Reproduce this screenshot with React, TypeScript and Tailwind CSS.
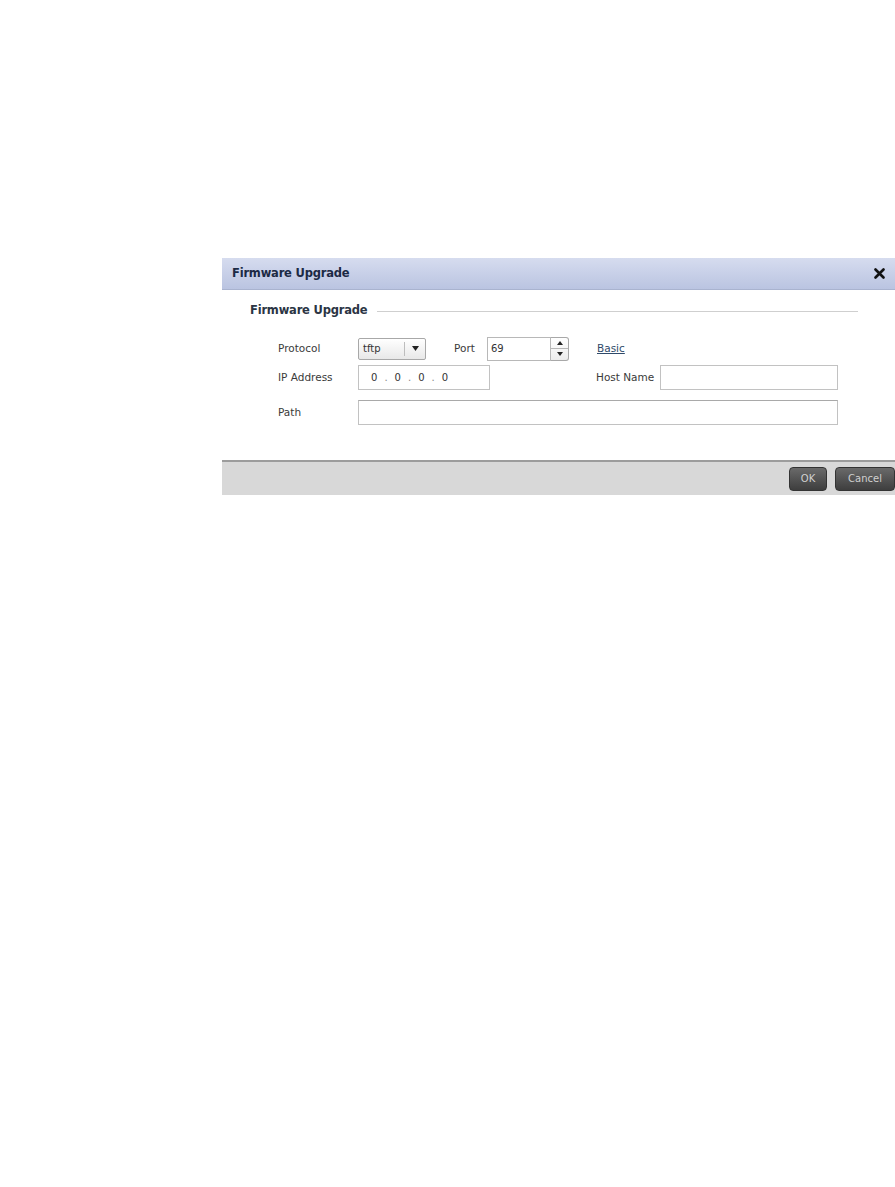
import React from 'react';

const font = { fontFamily: '"DejaVu Sans", "Liberation Sans", sans-serif' };

export default function App() {
  return (
    <div className="w-[895px] h-[1187px] bg-white overflow-hidden" style={font}>
      <div className="ml-[222px] mt-[258px] w-[673px]">
        <Header />
        <Body />
        <Footer />
      </div>
    </div>
  );
}

function Header() {
  return (
    <div className="h-[32px] flex items-center justify-between pl-[10px] pr-[10px] bg-gradient-to-b from-[#d6dcef] to-[#bac4e1] border-b border-[#a9b3cf]">
      <span className="text-[11.5px] font-bold text-[#1c2a45] tracking-[-0.2px]">Firmware Upgrade</span>
      <svg width="11" height="11" viewBox="0 0 11 11">
        <path d="M1.5 1.5 L9.5 9.5 M9.5 1.5 L1.5 9.5" stroke="#111" strokeWidth="2.6" strokeLinecap="round" />
      </svg>
    </div>
  );
}

function Body() {
  return (
    <div className="h-[170px] bg-white pt-[14px] pl-[28px] text-[10.5px] text-[#3a3a3a]">
      <div className="flex items-center h-[14px] pr-[37px]">
        <span className="text-[11.5px] font-bold text-[#2b3544] tracking-[-0.2px]">Firmware Upgrade</span>
        <div className="flex-1 h-px bg-[#cfcfcf] ml-[10px]" />
      </div>

      <div className="pl-[28px] mt-[18px]">
        <div className="flex items-center h-[25px]">
          <span className="w-[80px]">Protocol</span>
          <div className="w-[68px] h-[22px] border border-[#a8a8a8] rounded-[2px] bg-gradient-to-b from-white to-[#e8e8e8] flex items-center">
            <span className="flex-1 pl-[4px] text-[10px] text-[#333]">tftp</span>
            <div className="w-px h-[14px] bg-[#bdbdbd]" />
            <span className="w-[20px] flex justify-center">
              <svg width="7" height="5" viewBox="0 0 7 5"><path d="M0 0 H7 L3.5 5 Z" fill="#222" /></svg>
            </span>
          </div>
          <span className="ml-[28px] w-[33px]">Port</span>
          <div className="w-[64px] h-[24px] border border-[#b8b8b8] flex items-center pl-[3px] text-[10px] text-[#333]">69</div>
          <div className="w-[18px] h-[24px] border border-l-0 border-[#a8a8a8] rounded-r-[3px] flex flex-col bg-gradient-to-b from-white to-[#ececec]">
            <div className="flex-1 flex items-center justify-center border-b border-[#b5b5b5]">
              <svg width="6" height="4" viewBox="0 0 6 4"><path d="M0 4 H6 L3 0 Z" fill="#222" /></svg>
            </div>
            <div className="flex-1 flex items-center justify-center">
              <svg width="6" height="4" viewBox="0 0 6 4"><path d="M0 0 H6 L3 4 Z" fill="#222" /></svg>
            </div>
          </div>
          <span className="ml-[28px] underline text-[#2f4a6a]">Basic</span>
        </div>

        <div className="flex items-center h-[25px] mt-[4px]">
          <span className="w-[80px]">IP Address</span>
          <div className="w-[132px] h-[25px] border border-[#c2c2c2] flex items-center pl-[12px] text-[10px] text-[#333]">
            <span>0</span><span className="mx-[7px] text-[#888]">.</span>
            <span>0</span><span className="mx-[7px] text-[#888]">.</span>
            <span>0</span><span className="mx-[7px] text-[#888]">.</span>
            <span>0</span>
          </div>
          <span className="ml-[106px] w-[64px]">Host Name</span>
          <div className="w-[178px] h-[25px] border border-[#c2c2c2]" />
        </div>

        <div className="flex items-center h-[25px] mt-[10px]">
          <span className="w-[80px]">Path</span>
          <div className="w-[480px] h-[25px] border border-[#c2c2c2] border-t-[#a9a9a9]" />
        </div>
      </div>
    </div>
  );
}

function Footer() {
  return (
    <div className="h-[35px] bg-[#d8d8d8] border-t-2 border-[#9c9c9c] flex items-center justify-end gap-[8px]">
      <Button label="OK" w="w-[38px]" />
      <Button label="Cancel" w="w-[60px]" />
    </div>
  );
}

function Button({ label, w }: { label: string; w: string }) {
  return (
    <div className={`${w} h-[24px] rounded-[4px] bg-gradient-to-b from-[#6a6a6a] to-[#3e3e3e] border border-[#333] flex items-center justify-center text-[10px] font-medium text-[#d0d0d0]`}>
      {label}
    </div>
  );
}
